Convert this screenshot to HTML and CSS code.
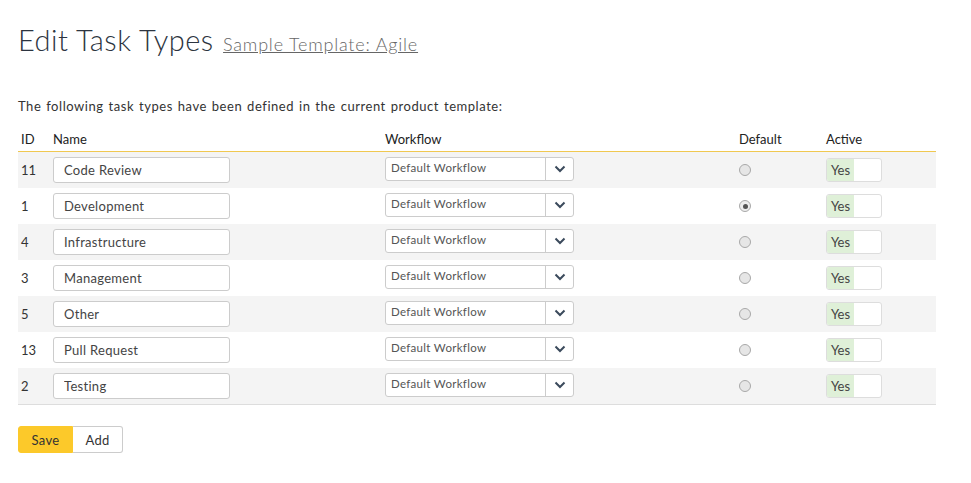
FILE: index.html
```html
<!DOCTYPE html>
<html>
<head>
<meta charset="utf-8">
<link rel="stylesheet" href="styles.css">
</head>
<body>
<div class="page">
  <h1 class="title">Edit Task Types <a class="sub" href="#">Sample Template: Agile</a></h1>
  <p class="intro">The following task types have been defined in the current product template:</p>
  <table class="grid">
    <thead>
      <tr>
        <th class="c-id">ID</th>
        <th class="c-name">Name</th>
        <th class="c-wf">Workflow</th>
        <th class="c-def">Default</th>
        <th class="c-act">Active</th>
      </tr>
    </thead>
    <tbody>
      <tr><td>11</td><td><input class="txt" value="Code Review"></td><td><div class="sel"><span class="sel-text">Default Workflow</span><span class="sel-btn"><svg width="12" height="8" viewBox="0 0 12 8"><path d="M1.5 1.5 L6 6 L10.5 1.5" fill="none" stroke="#3b4a5c" stroke-width="2"/></svg></span></div></td><td class="c-def"><span class="radio"></span></td><td><span class="tog"><span class="yes">Yes</span><span class="no"></span></span></td></tr>
      <tr><td>1</td><td><input class="txt" value="Development"></td><td><div class="sel"><span class="sel-text">Default Workflow</span><span class="sel-btn"><svg width="12" height="8" viewBox="0 0 12 8"><path d="M1.5 1.5 L6 6 L10.5 1.5" fill="none" stroke="#3b4a5c" stroke-width="2"/></svg></span></div></td><td class="c-def"><span class="radio on"></span></td><td><span class="tog"><span class="yes">Yes</span><span class="no"></span></span></td></tr>
      <tr><td>4</td><td><input class="txt" value="Infrastructure"></td><td><div class="sel"><span class="sel-text">Default Workflow</span><span class="sel-btn"><svg width="12" height="8" viewBox="0 0 12 8"><path d="M1.5 1.5 L6 6 L10.5 1.5" fill="none" stroke="#3b4a5c" stroke-width="2"/></svg></span></div></td><td class="c-def"><span class="radio"></span></td><td><span class="tog"><span class="yes">Yes</span><span class="no"></span></span></td></tr>
      <tr><td>3</td><td><input class="txt" value="Management"></td><td><div class="sel"><span class="sel-text">Default Workflow</span><span class="sel-btn"><svg width="12" height="8" viewBox="0 0 12 8"><path d="M1.5 1.5 L6 6 L10.5 1.5" fill="none" stroke="#3b4a5c" stroke-width="2"/></svg></span></div></td><td class="c-def"><span class="radio"></span></td><td><span class="tog"><span class="yes">Yes</span><span class="no"></span></span></td></tr>
      <tr><td>5</td><td><input class="txt" value="Other"></td><td><div class="sel"><span class="sel-text">Default Workflow</span><span class="sel-btn"><svg width="12" height="8" viewBox="0 0 12 8"><path d="M1.5 1.5 L6 6 L10.5 1.5" fill="none" stroke="#3b4a5c" stroke-width="2"/></svg></span></div></td><td class="c-def"><span class="radio"></span></td><td><span class="tog"><span class="yes">Yes</span><span class="no"></span></span></td></tr>
      <tr><td>13</td><td><input class="txt" value="Pull Request"></td><td><div class="sel"><span class="sel-text">Default Workflow</span><span class="sel-btn"><svg width="12" height="8" viewBox="0 0 12 8"><path d="M1.5 1.5 L6 6 L10.5 1.5" fill="none" stroke="#3b4a5c" stroke-width="2"/></svg></span></div></td><td class="c-def"><span class="radio"></span></td><td><span class="tog"><span class="yes">Yes</span><span class="no"></span></span></td></tr>
      <tr><td>2</td><td><input class="txt" value="Testing"></td><td><div class="sel"><span class="sel-text">Default Workflow</span><span class="sel-btn"><svg width="12" height="8" viewBox="0 0 12 8"><path d="M1.5 1.5 L6 6 L10.5 1.5" fill="none" stroke="#3b4a5c" stroke-width="2"/></svg></span></div></td><td class="c-def"><span class="radio"></span></td><td><span class="tog"><span class="yes">Yes</span><span class="no"></span></span></td></tr>
    </tbody>
  </table>
  <div class="btns"><button class="btn save">Save</button><button class="btn add">Add</button></div>
</div>
</body>
</html>
```

FILE: styles.css
```css
html, body { margin: 0; padding: 0; background: #fff; }
body { font-family: "Lato", "Open Sans", sans-serif; color: #333; font-size: 13px; }
.page { padding: 16px 35px 0 18px; }
.title {
  margin: 8px 0 0 0;
  font-family: "Lato", sans-serif;
  font-weight: 300;
  font-size: 29px;
  color: #2c3440;
  line-height: 32px;
  letter-spacing: 0.5px;
}
.sub {
  font-size: 18px;
  color: #666;
  text-decoration: underline;
  font-weight: 300;
  letter-spacing: 0.8px;
  margin-left: 1px;
}
.intro { margin: 38px 0 0 0; font-size: 13px; color: #333; line-height: 16px; letter-spacing: 0.55px; word-spacing: 1px; }
.grid { width: 918px; border-collapse: collapse; margin-top: 12px; }
.grid th {
  text-align: left; font-weight: 400; font-size: 13px; color: #222;
  height: 25px; padding: 0 0 0 0; vertical-align: middle;
  border-bottom: 1px solid #f0c850;
}
.grid th.c-id { padding-left: 3px; width: 32px; }
.c-name { width: 332px; }
.c-wf { width: 354px; }
.c-def { width: 87px; }
.grid td { height: 36px; padding: 0; vertical-align: middle; font-size: 13px; color: #333; }
.grid td:first-child { padding-left: 3px; }
.grid tbody tr:nth-child(odd) { background: #f4f4f4; }
.grid tbody tr:last-child td { border-bottom: 1px solid #ddd; }
.txt {
  box-sizing: border-box; width: 177px; height: 26px;
  border: 1px solid #ccc; border-radius: 3px; background: #fff;
  padding: 0 10px; font-family: "Lato", "Open Sans", sans-serif; font-size: 13px; color: #444;
  letter-spacing: 0.3px;
  display: block;
}
.sel {
  box-sizing: border-box; width: 189px; height: 24px; margin-top: -2px;
  border: 1px solid #ccc; border-radius: 3px; background: #fff;
  display: flex; align-items: center;
}
.sel-text { flex: 1; padding-left: 5px; font-size: 11.5px; color: #555; letter-spacing: 0.3px; margin-top: -3px; }
.sel-btn {
  width: 27px; height: 100%; border-left: 1px solid #ccc;
  display: flex; align-items: center; justify-content: center;
}
.radio {
  display: block; box-sizing: border-box; width: 12px; height: 12px;
  border-radius: 50%; border: 1px solid #a8a8a8; background: #e6e6e6;
  position: relative;
}
.radio.on { background: #eee; }
.radio.on::after {
  content: ""; position: absolute; left: 2.5px; top: 2.5px; width: 5px; height: 5px;
  border-radius: 50%; background: #555;
}
.tog {
  display: flex; box-sizing: border-box; width: 56px; height: 24px;
  border: 1px solid #ddd; border-radius: 3px; overflow: hidden; background: #fff;
}
.yes { background: #dff0d8; width: 27px; font-size: 13px; color: #444; display: flex; align-items: center; justify-content: center; }
.no { flex: 1; }
.btns { display: flex; margin-top: 21px; }
.btn {
  height: 27px; font-family: "Lato", "Open Sans", sans-serif; font-size: 13px; color: #333;
  border: 1px solid #ccc; background: #fff; padding: 0; cursor: pointer; letter-spacing: 0.3px;
}
.save { width: 55px; background: #fcc92a; border-color: #fcc92a; border-radius: 3px 0 0 3px; }
.add { width: 50px; border-left: none; border-radius: 0 3px 3px 0; }
```
